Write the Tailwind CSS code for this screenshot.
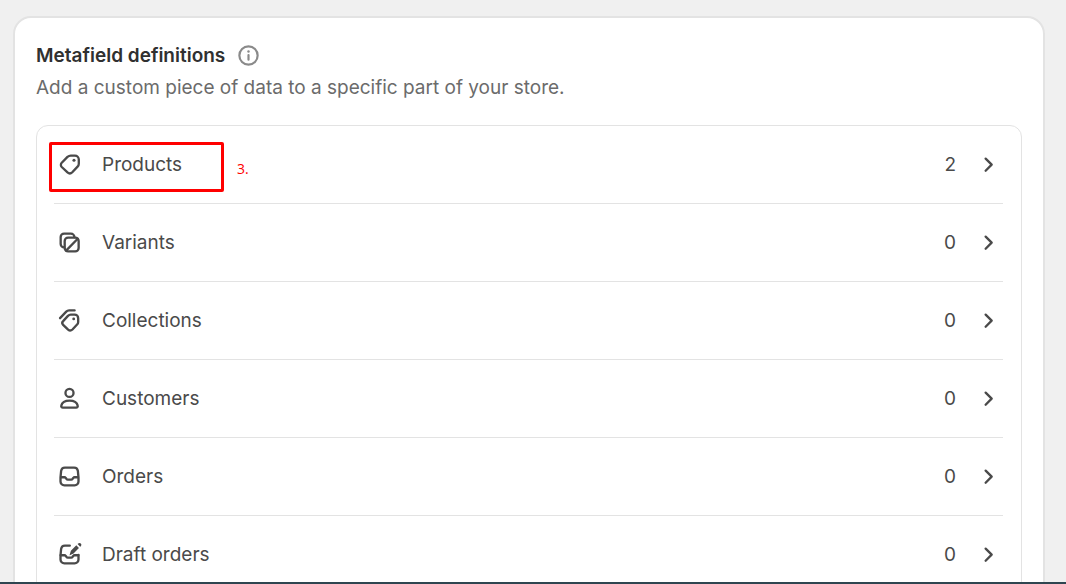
<!DOCTYPE html>
<html lang="en">
<head>
    <meta charset="UTF-8">
    <meta name="viewport" content="width=device-width, initial-scale=1.0">
    <title>Metafield definitions</title>
    <script src="https://cdn.jsdelivr.net/npm/@tailwindcss/browser@4"></script>
</head>
<body class="flex h-screen flex-col overflow-hidden bg-[#f0f0f0] font-['Inter',sans-serif] text-[19px] leading-[30px] text-[#4a4a4a]">
    <!-- Main Content -->
    <main class="min-h-0 flex-1 overflow-hidden pt-4 pr-[21px] pl-[13px]">
        <section class="rounded-t-[18px] border-2 border-[#e3e3e3] bg-white px-[21px] pt-[22px] pb-6">
            <div class="flex items-center gap-2">
                <h1 class="font-semibold text-[#303030]">Metafield definitions</h1>
                <button type="button" aria-label="About metafield definitions" class="text-[#8a8a8a]">
                    <svg class="size-[31px]" viewBox="0 0 20 20" fill="none" stroke="currentColor" stroke-width="1.4" stroke-linecap="round">
                        <circle cx="10" cy="10" r="5.9"/>
                        <path d="M10 9.7v3"/>
                        <circle cx="10" cy="7.4" r=".8" fill="currentColor" stroke="none"/>
                    </svg>
                </button>
            </div>
            <p class="mt-0.5 text-[#6b6b6b]">Add a custom piece of data to a specific part of your store.</p>

            <!-- Definitions list -->
            <ul class="mt-[22px] rounded-xl border border-[#e3e3e3] pr-[18px] pl-[17px]">
                <li class="relative border-b border-[#e3e3e3]">
                    <a href="#products" class="flex h-[77px] items-center">
                        <svg class="mr-[17px] size-[31px]" viewBox="0 0 20 20" fill="none" stroke="currentColor" stroke-width="1.5" stroke-linejoin="round">
                            <path d="M10.8 4.3h2.7a2.5 2.5 0 0 1 2.5 2.5v2.7c0 .7-.3 1.4-.8 1.9l-3.4 3.6c-.9.9-2.2.9-3.1.1l-3.7-3.5a1.9 1.9 0 0 1 0-2.7l3.7-3.8c.6-.5 1.3-.8 2.1-.8Z"/>
                            <circle cx="12.9" cy="7.3" r="1" fill="currentColor" stroke="none"/>
                        </svg>
                        <span class="flex-1">Products</span>
                        <span class="mr-4">2</span>
                        <svg class="size-[31px]" viewBox="0 0 20 20" fill="none" stroke="currentColor" stroke-width="1.5" stroke-linecap="round" stroke-linejoin="round"><path d="m8.8 6.2 3.9 3.9-3.9 3.9"/></svg>
                    </a>
                    <!-- Step marker -->
                    <div class="pointer-events-none absolute top-4 -left-[5px] flex h-[50px] items-center gap-[13px]">
                        <span class="h-[50px] w-[175px] rounded-xs border-3 border-[#ff0000]"></span>
                        <span class="pt-1 font-['Open_Sans',sans-serif] text-[14px] leading-5 text-[#ff0000]">3.</span>
                    </div>
                </li>
                <li class="border-b border-[#e3e3e3]">
                    <a href="#variants" class="flex h-[77px] items-center">
                        <svg class="mr-[17px] size-[31px]" viewBox="0 0 20 20" fill="none" stroke="currentColor" stroke-width="1.5" stroke-linecap="round" stroke-linejoin="round">
                            <rect x="6.9" y="6.9" width="9" height="8.8" rx="2.2"/>
                            <path d="M6.6 13.2a2.3 2.3 0 0 1-2.3-2.3V6.5a2.2 2.2 0 0 1 2.2-2.2h4.4a2.3 2.3 0 0 1 2.3 2.3"/>
                            <path d="m7.8 15.2 7.5-7.6"/>
                        </svg>
                        <span class="flex-1">Variants</span>
                        <span class="mr-4">0</span>
                        <svg class="size-[31px]" viewBox="0 0 20 20" fill="none" stroke="currentColor" stroke-width="1.5" stroke-linecap="round" stroke-linejoin="round"><path d="m8.8 6.2 3.9 3.9-3.9 3.9"/></svg>
                    </a>
                </li>
                <li class="border-b border-[#e3e3e3]">
                    <a href="#collections" class="flex h-[77px] items-center">
                        <svg class="mr-[17px] size-[31px]" viewBox="0 0 20 20" fill="none" stroke="currentColor" stroke-width="1.5" stroke-linecap="round" stroke-linejoin="round">
                            <path d="M10.8 6.2h2.5a2.3 2.3 0 0 1 2.3 2.3v2.4c0 .6-.2 1.2-.7 1.7l-3 3.2c-.8.8-2 .8-2.8.1l-3.2-3.1a1.7 1.7 0 0 1 0-2.4l3.1-3.4c.5-.5 1.1-.8 1.8-.8Z"/>
                            <path d="m3.9 8.5 4-4.2c.5-.5 1.1-.8 1.8-.8h3.6"/>
                            <circle cx="12.7" cy="9" r=".9" fill="currentColor" stroke="none"/>
                        </svg>
                        <span class="flex-1">Collections</span>
                        <span class="mr-4">0</span>
                        <svg class="size-[31px]" viewBox="0 0 20 20" fill="none" stroke="currentColor" stroke-width="1.5" stroke-linecap="round" stroke-linejoin="round"><path d="m8.8 6.2 3.9 3.9-3.9 3.9"/></svg>
                    </a>
                </li>
                <li class="border-b border-[#e3e3e3]">
                    <a href="#customers" class="flex h-[77px] items-center">
                        <svg class="mr-[17px] size-[31px]" viewBox="0 0 20 20" fill="none" stroke="currentColor" stroke-width="1.5" stroke-linejoin="round">
                            <circle cx="10" cy="6.4" r="2.6"/>
                            <path d="M4.7 14.6c.5-2 2.6-3.2 5.3-3.2s4.8 1.2 5.3 3.2c.2.7-.3 1.3-1 1.3H5.7c-.7 0-1.2-.6-1-1.3Z"/>
                        </svg>
                        <span class="flex-1">Customers</span>
                        <span class="mr-4">0</span>
                        <svg class="size-[31px]" viewBox="0 0 20 20" fill="none" stroke="currentColor" stroke-width="1.5" stroke-linecap="round" stroke-linejoin="round"><path d="m8.8 6.2 3.9 3.9-3.9 3.9"/></svg>
                    </a>
                </li>
                <li class="border-b border-[#e3e3e3]">
                    <a href="#orders" class="flex h-[77px] items-center">
                        <svg class="mr-[17px] size-[31px]" viewBox="0 0 20 20" fill="none" stroke="currentColor" stroke-width="1.5" stroke-linejoin="round">
                            <path d="M7 4.3h6c1.2 0 2.2.9 2.4 2.1l.4 4.1v2.7a2.5 2.5 0 0 1-2.5 2.5H6.7a2.5 2.5 0 0 1-2.5-2.5v-2.7l.4-4.1C4.8 5.200 5.8 4.3 7 4.3Z"/>
                            <path d="M4.3 10.5h2.4c.4 0 .7.2.9.5l.4.5c.2.3.5.5.9.5h2.2c.4 0 .7-.2.9-.5l.4-.5c.2-.3.5-.5.9-.5h2.4"/>
                        </svg>
                        <span class="flex-1">Orders</span>
                        <span class="mr-4">0</span>
                        <svg class="size-[31px]" viewBox="0 0 20 20" fill="none" stroke="currentColor" stroke-width="1.5" stroke-linecap="round" stroke-linejoin="round"><path d="m8.8 6.2 3.9 3.9-3.9 3.9"/></svg>
                    </a>
                </li>
                <li>
                    <a href="#draft-orders" class="flex h-[77px] items-center">
                        <svg class="mr-[17px] size-[31px]" viewBox="0 0 20 20" fill="none" stroke="currentColor" stroke-width="1.5" stroke-linecap="round" stroke-linejoin="round">
                            <path d="M10.2 4.3H7c-1.2 0-2.2.9-2.4 2.1l-.4 4.1v2.7a2.5 2.5 0 0 0 2.5 2.5h6.6a2.5 2.5 0 0 0 2.5-2.5v-2.9"/>
                            <path d="M4.3 10.5h2.4c.4 0 .7.2.9.5l.4.5c.2.3.5.5.9.5h2.2c.4 0 .7-.2.9-.5l.4-.5c.2-.3.5-.5.9-.5h2.4"/>
                            <path fill="currentColor" stroke="none" d="m10.1 10.1.8-2.5 3.500-3.500 1.700 1.700-3.500 3.500-2.100 1.100c-.3.1-.5 0-.4-.3ZM15.200 3.300l.4-.4c.5-.5 1.200-.5 1.700 0s.5 1.200 0 1.700l-.4.400Z"/>
                        </svg>
                        <span class="flex-1">Draft orders</span>
                        <span class="mr-4">0</span>
                        <svg class="size-[31px]" viewBox="0 0 20 20" fill="none" stroke="currentColor" stroke-width="1.5" stroke-linecap="round" stroke-linejoin="round"><path d="m8.8 6.2 3.9 3.9-3.9 3.9"/></svg>
                    </a>
                </li>
            </ul>
        </section>
    </main>
    <footer class="h-0.5 shrink-0 bg-[#2f4550]"></footer>
</body>
</html>
